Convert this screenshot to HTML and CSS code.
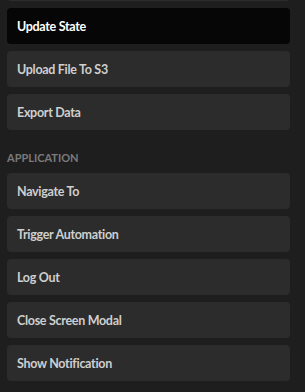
FILE: index.html
```html
<!DOCTYPE html>
<html>
<head>
<meta charset="utf-8">
<link rel="stylesheet" href="styles.css">
</head>
<body>
<div class="panel">
  <div class="list">
    <div class="item item-cut"></div>
    <div class="item item-active">Update State</div>
    <div class="item">Upload File To S3</div>
    <div class="item">Export Data</div>
  </div>
  <div class="section-label">APPLICATION</div>
  <div class="list">
    <div class="item">Navigate To</div>
    <div class="item">Trigger Automation</div>
    <div class="item">Log Out</div>
    <div class="item">Close Screen Modal</div>
    <div class="item">Show Notification</div>
  </div>
</div>
</body>
</html>
```
FILE: styles.css
```css
html, body {
  margin: 0;
  padding: 0;
  background: #1e1e1e;
  overflow: hidden;
}
.panel {
  width: 283px;
  padding-left: 7px;
  font-family: Lato, "Noto Sans", sans-serif;
  display: flex;
  flex-direction: column;
}
.list {
  display: flex;
  flex-direction: column;
  gap: 7px;
}
.item-cut {
  margin-top: -35px;
}
.item {
  height: 36px;
  box-sizing: border-box;
  background: #2c2c2c;
  border-radius: 4px;
  color: #cfcfcf;
  font-size: 12.5px;
  font-weight: 700;
  letter-spacing: -0.3px;
  padding-left: 10px;
  display: flex;
  align-items: center;
}
.item-active {
  background: #060606;
  color: #ffffff;
}
.section-label {
  color: #7a7a7a;
  font-size: 11px;
  font-weight: 700;
  line-height: 14px;
  padding-top: 21px;
  padding-bottom: 8px;
}
```
